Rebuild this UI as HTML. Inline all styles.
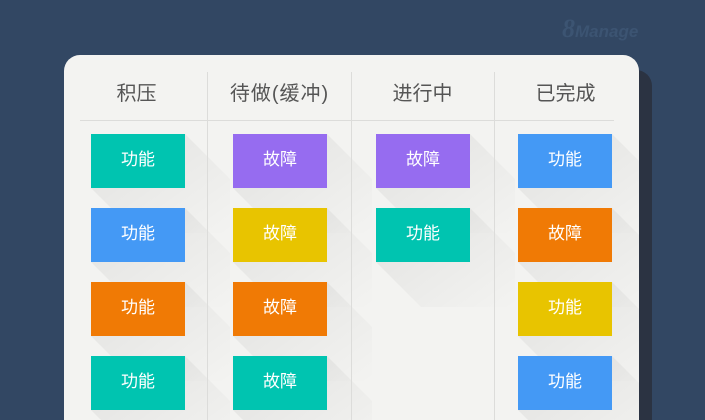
<!DOCTYPE html>
<html><head><meta charset="utf-8"><style>
html{height:420px;overflow:hidden}
body{margin:0;width:705px;height:420px;background:#324763;position:relative;overflow:hidden;font-family:"Liberation Sans","Noto Sans CJK SC",sans-serif}
.logo{position:absolute;left:562px;top:14px;color:#3c5472;font-weight:bold;font-style:italic;font-size:17px}
.logo b{font-size:26px;font-family:"Liberation Serif",serif}
.shadow{position:absolute;left:80px;top:70px;width:572px;height:350px;background:#2b3342;border-radius:16px 16px 0 0}
.board{position:absolute;left:64px;top:55px;width:575px;height:365px;background:#f3f3f1;border-radius:16px 16px 0 0;overflow:hidden}
.h{position:absolute;top:22px;font-size:20px;color:#555;text-align:center;width:143px}
.vl{position:absolute;top:17px;width:1px;height:348px;background:#dcdcda}
.hl{position:absolute;left:16px;top:65px;width:534px;height:1px;background:#dcdcda}
.c{position:absolute;width:94px;height:54px;color:#fff;font-size:17px;text-align:center;line-height:52px}
svg{position:absolute;left:0;top:0}
</style></head><body>
<div class="logo"><b>8</b>Manage</div>
<div class="shadow"></div>
<div class="board">
<svg width="575" height="365"><defs><linearGradient id="g" x1="0" y1="0" x2="1" y2="1"><stop offset="0" stop-color="#000" stop-opacity="0.07"/><stop offset="1" stop-color="#000" stop-opacity="0"/></linearGradient></defs>
<g fill="url(#g)">
<path d="M121 79l45 45v54h-94l-45-45z"/><path d="M121 153l45 45v54h-94l-45-45z"/><path d="M121 227l45 45v54h-94l-45-45z"/><path d="M121 301l45 45v54h-94l-45-45z"/>
<path d="M263 79l45 45v54h-94l-45-45z"/><path d="M263 153l45 45v54h-94l-45-45z"/><path d="M263 227l45 45v54h-94l-45-45z"/><path d="M263 301l45 45v54h-94l-45-45z"/>
<path d="M406 79l45 45v54h-94l-45-45z"/><path d="M406 153l45 45v54h-94l-45-45z"/>
<path d="M548 79l45 45v54h-94l-45-45z"/><path d="M548 153l45 45v54h-94l-45-45z"/><path d="M548 227l45 45v54h-94l-45-45z"/><path d="M548 301l45 45v54h-94l-45-45z"/>
</g></svg>
<div class="h" style="left:1px">积压</div>
<div class="h" style="left:144px;letter-spacing:1px">待做(缓冲)</div>
<div class="h" style="left:287px">进行中</div>
<div class="h" style="left:430px">已完成</div>
<div class="vl" style="left:143px"></div><div class="vl" style="left:287px"></div><div class="vl" style="left:430px"></div>
<div class="hl"></div>
<div class="c" style="left:27px;top:79px;background:#00c4b0">功能</div>
<div class="c" style="left:27px;top:153px;background:#4499f5">功能</div>
<div class="c" style="left:27px;top:227px;background:#f07a05">功能</div>
<div class="c" style="left:27px;top:301px;background:#00c4b0">功能</div>
<div class="c" style="left:169px;top:79px;background:#966cf0">故障</div>
<div class="c" style="left:169px;top:153px;background:#e8c400">故障</div>
<div class="c" style="left:169px;top:227px;background:#f07a05">故障</div>
<div class="c" style="left:169px;top:301px;background:#00c4b0">故障</div>
<div class="c" style="left:312px;top:79px;background:#966cf0">故障</div>
<div class="c" style="left:312px;top:153px;background:#00c4b0">功能</div>
<div class="c" style="left:454px;top:79px;background:#4499f5">功能</div>
<div class="c" style="left:454px;top:153px;background:#f07a05">故障</div>
<div class="c" style="left:454px;top:227px;background:#e8c400">功能</div>
<div class="c" style="left:454px;top:301px;background:#4499f5">功能</div>
</div>
</body></html>
